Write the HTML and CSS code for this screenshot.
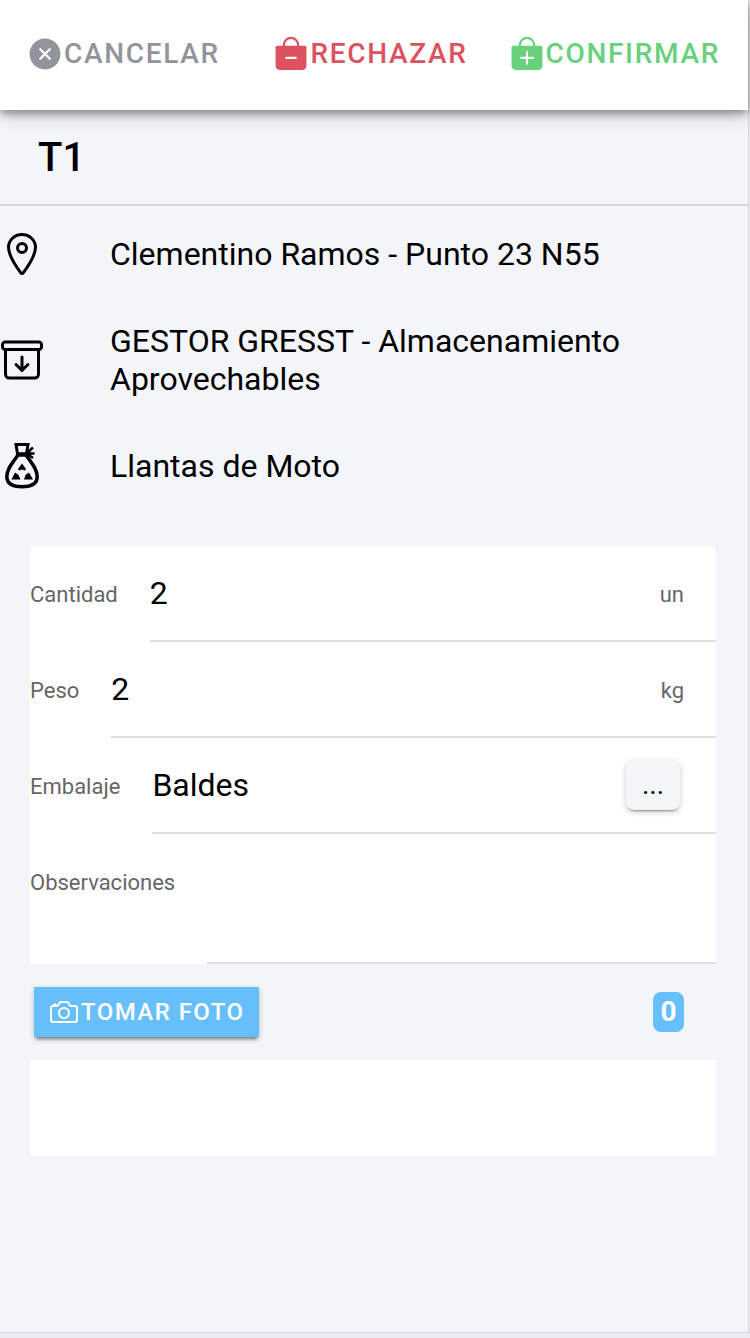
FILE: index.html
```html
<!DOCTYPE html>
<html lang="es">
<head>
<meta charset="utf-8">
<meta name="viewport" content="width=device-width, initial-scale=1">
<title>T1</title>
<link rel="stylesheet" href="styles.css">
</head>
<body>
<div class="page">
  <header class="toolbar">
    <button type="button" class="action action-cancel">
      <svg class="action-icon" viewBox="0 0 512 512" aria-hidden="true"><path fill="currentColor" d="M256 48C141.300 48 48 141.300 48 256s93.300 208 208 208 208-93.300 208-208S370.700 48 256 48z"/><path fill="none" stroke="#fff" stroke-width="32" stroke-linecap="round" d="M192 192l128 128M320 192L192 320"/></svg>
      <span>Cancelar</span>
    </button>
    <button type="button" class="action action-reject">
      <svg class="action-icon" viewBox="0 0 512 512" aria-hidden="true"><path fill="currentColor" d="M442 144H70a22 22 0 0 0-22 22v250a56 56 0 0 0 56 56h304a56 56 0 0 0 56-56V166a22 22 0 0 0-22-22z"/><path fill="none" stroke="currentColor" stroke-width="30" d="M160 152v-16a96 96 0 0 1 192 0v16"/><path stroke="#fff" stroke-width="32" stroke-linecap="round" d="M192 308h128"/></svg>
      <span>Rechazar</span>
    </button>
    <button type="button" class="action action-confirm">
      <svg class="action-icon" viewBox="0 0 512 512" aria-hidden="true"><path fill="currentColor" d="M442 144H70a22 22 0 0 0-22 22v250a56 56 0 0 0 56 56h304a56 56 0 0 0 56-56V166a22 22 0 0 0-22-22z"/><path fill="none" stroke="currentColor" stroke-width="30" d="M160 152v-16a96 96 0 0 1 192 0v16"/><path stroke="#fff" stroke-width="28" stroke-linecap="round" d="M176 308h160M256 228v160"/></svg>
      <span>Confirmar</span>
    </button>
  </header>

  <main>
    <h1 class="title">T1</h1>

    <ul class="details">
      <li class="detail">
        <svg class="detail-icon" viewBox="0 0 512 512" fill="none" stroke="currentColor" stroke-width="32" stroke-linecap="round" stroke-linejoin="round" aria-hidden="true"><path d="M256 48c-79.500 0-144 61.390-144 137 0 87 96 224.870 131.250 272.490a15.770 15.770 0 0 0 25.500 0C304 409.890 400 272.070 400 185c0-75.610-64.500-137-144-137z"/><circle cx="256" cy="192" r="48"/></svg>
        <span>Clementino Ramos - Punto 23 N55</span>
      </li>
      <li class="detail">
        <svg class="detail-icon" viewBox="0 0 512 512" fill="none" stroke="currentColor" stroke-width="32" stroke-linecap="round" stroke-linejoin="round" aria-hidden="true"><path d="M80 152v256a40 40 0 0 0 40 40h272a40 40 0 0 0 40-40V152"/><rect x="48" y="64" width="416" height="80" rx="28"/><path d="M320 304l-64 64-64-64M256 346V224"/></svg>
        <span>GESTOR GRESST - Almacenamiento Aprovechables</span>
      </li>
      <li class="detail">
        <svg class="detail-icon" viewBox="0 0 48 48" aria-hidden="true"><g fill="none" stroke="currentColor" stroke-width="3.500"><path stroke-width="3" d="M18 2.500h12l-1.500 9.200h-9z"/><path d="M20 13C15 20.500 8.800 26.500 8.800 34.500c0 7 5.200 10.200 15.200 10.200s15.200-3.200 15.200-10.200c0-8-6.200-14-11.200-21.500z"/><path stroke-width="2.500" d="M28 12l7-6.500M28 11.500h8.500M28 11l7 5"/></g><path fill="currentColor" d="M24 21.500l4 5.500-1 1.500-3-1-3 1-1-1.500zM17 30.500l3.500 2.500 2 4.500h-9zM31 30.500l4 7h-9l1.500-4.500z"/></svg>
        <span>Llantas de Moto</span>
      </li>
    </ul>

    <form class="card">
      <div class="field">
        <label for="cantidad">Cantidad</label>
        <div class="field-body">
          <input id="cantidad" type="text" inputmode="numeric" value="2">
          <span class="unit">un</span>
        </div>
      </div>
      <div class="field">
        <label for="peso">Peso</label>
        <div class="field-body">
          <input id="peso" type="text" inputmode="numeric" value="2">
          <span class="unit">kg</span>
        </div>
      </div>
      <div class="field">
        <label for="embalaje">Embalaje</label>
        <div class="field-body">
          <input id="embalaje" type="text" value="Baldes">
          <button type="button" class="more" aria-label="Elegir embalaje">...</button>
        </div>
      </div>
      <div class="field field-notes">
        <label for="observaciones">Observaciones</label>
        <div class="field-body">
          <textarea id="observaciones"></textarea>
        </div>
      </div>
      <div class="photo-bar">
        <button type="button" class="photo">
          <svg class="photo-icon" viewBox="0 0 512 512" fill="none" stroke="currentColor" stroke-width="32" stroke-linecap="round" stroke-linejoin="round" aria-hidden="true"><path d="M350.540 148.680l-26.620-42.060C318.310 100.080 310.620 96 302 96h-92c-8.620 0-16.310 4.080-21.920 10.620l-26.620 42.060C155.850 155.230 148.620 160 140 160H80a32 32 0 0 0-32 32v192a32 32 0 0 0 32 32h352a32 32 0 0 0 32-32V192a32 32 0 0 0-32-32h-59c-8.650 0-16.850-4.770-22.460-11.320z"/><circle cx="256" cy="272" r="80"/><path d="M124 158v-22h-24v22"/></svg>
          <span>Tomar foto</span>
        </button>
        <span class="badge">0</span>
      </div>
      <div class="photos"></div>
    </form>
  </main>
</div>
</body>
</html>
```
FILE: styles.css
```css
* {
  box-sizing: border-box;
}

body {
  margin: 0;
  padding: 0 1px 5px 0;
  min-height: 100vh;
  display: flex;
  background: #e9edf3;
  color: #000;
  font-family: Roboto, "Liberation Sans", sans-serif;
  font-size: 32px;
  line-height: 38px;
}

button,
input,
textarea {
  font: inherit;
  color: inherit;
  border: 0;
  padding: 0;
  background: none;
}

.page {
  flex: 1;
  min-width: 0;
  background: #f3f5f9;
  border-right: 1px solid #d3d6da;
  border-bottom: 1px solid #d3d6da;
}

.toolbar {
  position: relative;
  display: flex;
  align-items: center;
  justify-content: flex-end;
  gap: 40px;
  height: 110px;
  padding: 0 28px 2px 26px;
  background: #fff;
  box-shadow: 0 4px 8px rgba(0, 0, 0, 0.35), 0 8px 20px -4px rgba(0, 0, 0, 0.2);
}

.action,
.photo {
  display: flex;
  align-items: center;
  font-weight: 500;
  letter-spacing: 0.06em;
  text-transform: uppercase;
}

.action {
  font-size: 28px;
}

.action-icon {
  width: 38px;
  height: 38px;
}

.action-cancel {
  margin-right: auto;
  color: #92949c;
}

.action-reject {
  color: #dc525f;
}

.action-confirm {
  color: #67d27b;
}

.title {
  margin: 0;
  padding: 24px 38px 22px;
  border-bottom: 2px solid #d6d7db;
  font-size: 40px;
  font-weight: 500;
  line-height: 48px;
}

.details {
  list-style: none;
  margin: 0;
  padding: 0;
}

.detail {
  display: flex;
  align-items: center;
  gap: 64px;
  min-height: 96px;
  padding: 20px 32px 20px 0;
}

.detail-icon {
  flex: none;
  width: 48px;
  height: 48px;
  margin-left: -2px;
}

.card {
  margin: 32px 32px 0 30px;
  border-radius: 4px;
  background: #fff;
}

.field {
  display: flex;
  gap: 32px;
  min-height: 96px;
}

.field label {
  padding-top: 2px;
  font-size: 22px;
  line-height: 94px;
  color: #666;
}

.field-body {
  flex: 1;
  min-width: 0;
  display: flex;
  align-items: center;
  padding-right: 32px;
  border-bottom: 2px solid #dedede;
}

.field-body input,
.field-body textarea {
  flex: 1;
  min-width: 0;
  outline: 0;
}

.field-notes {
  min-height: 130px;
}

.field-body textarea {
  align-self: stretch;
  resize: none;
}

.unit {
  padding-top: 4px;
  font-size: 22px;
  color: #666;
}

.more {
  width: 54px;
  height: 50px;
  margin-right: 4px;
  border-radius: 8px;
  background: #f3f5f9;
  font-size: 28px;
  box-shadow: 0 3px 2px -2px rgba(0, 0, 0, 0.35), 0 2px 6px rgba(0, 0, 0, 0.2);
}

.photo-bar {
  display: flex;
  align-items: center;
  justify-content: space-between;
  height: 96px;
  padding: 0 32px 0 4px;
  background: #f3f5f9;
}

.photo {
  height: 50px;
  padding: 0 15px 0 14px;
  gap: 1px;
  background: #66bffb;
  color: #fff;
  font-size: 24px;
  box-shadow: 0 4px 3px -2px rgba(0, 0, 0, 0.4), 0 2px 6px rgba(0, 0, 0, 0.2);
}

.photo-icon {
  width: 32px;
  height: 32px;
}

.badge {
  min-width: 31px;
  padding: 1px 7px;
  border-radius: 8px;
  background: #66bffb;
  color: #fff;
  font-size: 28px;
  font-weight: 700;
  text-align: center;
}

.photos {
  min-height: 96px;
}
```
